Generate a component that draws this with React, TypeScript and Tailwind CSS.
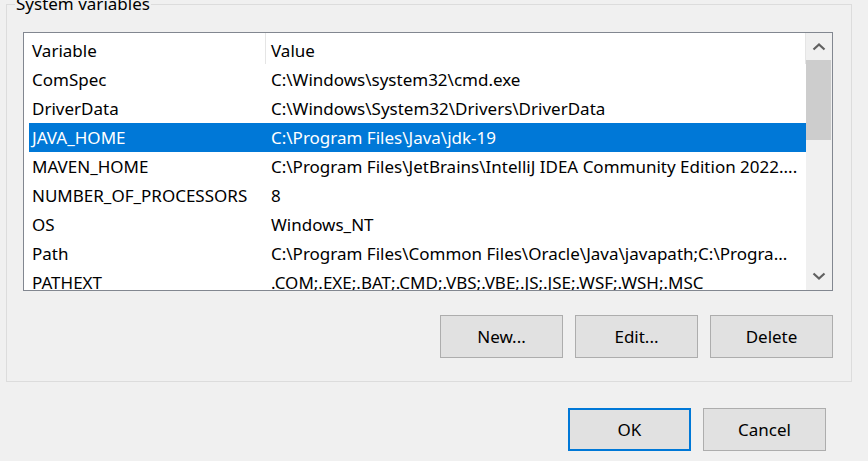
import React from "react";

type EnvVar = { name: string; value: string };

const vars: EnvVar[] = [
  { name: "ComSpec", value: "C:\\Windows\\system32\\cmd.exe" },
  { name: "DriverData", value: "C:\\Windows\\System32\\Drivers\\DriverData" },
  { name: "JAVA_HOME", value: "C:\\Program Files\\Java\\jdk-19" },
  { name: "MAVEN_HOME", value: "C:\\Program Files\\JetBrains\\IntelliJ IDEA Community Edition 2022...." },
  { name: "NUMBER_OF_PROCESSORS", value: "8" },
  { name: "OS", value: "Windows_NT" },
  { name: "Path", value: "C:\\Program Files\\Common Files\\Oracle\\Java\\javapath;C:\\Progra..." },
  { name: "PATHEXT", value: ".COM;.EXE;.BAT;.CMD;.VBS;.VBE;.JS;.JSE;.WSF;.WSH;.MSC" },
];

const selected = "JAVA_HOME";

function Chevron({ down = false }: { down?: boolean }) {
  return (
    <svg width="14" height="8" viewBox="0 0 14 8" className="block">
      <path
        d={down ? "M1.5 1.5 L7 6.5 L12.5 1.5" : "M1.5 6.5 L7 1.5 L12.5 6.5"}
        fill="none"
        stroke="#606060"
        strokeWidth="2.2"
      />
    </svg>
  );
}

function WinButton({ label, focused = false }: { label: string; focused?: boolean }) {
  return (
    <button
      type="button"
      className={[
        "flex h-[43px] w-[123px] items-center justify-center bg-[#e1e1e1] text-[17px] text-black",
        focused ? "border-2 border-[#0078d7]" : "border border-[#adadad]",
      ].join(" ")}
    >
      {label}
    </button>
  );
}

export default function App() {
  return (
    <div
      className="h-[461px] w-[868px] overflow-hidden bg-[#f0f0f0] text-black"
      style={{ fontFamily: '"Noto Sans", "Open Sans", sans-serif' }}
    >
      {/* System variables group box */}
      <div className="relative ml-[6px] mt-[4px] h-[378px] w-[846px] border border-[#dcdcdc]">
        <span className="absolute left-[8px] top-[-12px] bg-[#f0f0f0] px-[1px] text-[17px] leading-[22px]">
          System variables
        </span>

        <div className="ml-[16px] mt-[27px] flex h-[259px] w-[810px] border border-[#828790] bg-white">
          <div className="flex-1 overflow-hidden pl-[5px]">
            <div className="flex h-[32px] text-[17px]">
              <div className="flex w-[236px] items-center pl-[3px] pt-[3px]">Variable</div>
              <div className="h-[31px] w-px bg-[#e5e5e5]" />
              <div className="flex flex-1 items-center pl-[5px] pt-[3px]">Value</div>
              <div className="h-[31px] w-px bg-[#e5e5e5]" />
            </div>
            {vars.map((v) => {
              const isSel = v.name === selected;
              return (
                <div
                  key={v.name}
                  className={[
                    "flex h-[29px] items-center whitespace-nowrap text-[17px]",
                    isSel ? "bg-[#0078d7] text-white" : "",
                  ].join(" ")}
                >
                  <div className="w-[237px] shrink-0 pl-[3px]">{v.name}</div>
                  <div className="flex-1 overflow-hidden pl-[5px]">{v.value}</div>
                </div>
              );
            })}
          </div>

          {/* scrollbar */}
          <div className="flex w-[26px] flex-col bg-[#f0f0f0]">
            <div className="flex h-[27px] items-center justify-center pr-px">
              <Chevron />
            </div>
            <div className="mr-px h-[80px] bg-[#cdcdcd]" />
            <div className="flex-1" />
            <div className="flex h-[28px] items-center justify-center pr-px">
              <Chevron down />
            </div>
          </div>
        </div>

        <div className="mr-[18px] mt-[24px] flex justify-end gap-[12px]">
          <WinButton label="New..." />
          <WinButton label="Edit..." />
          <WinButton label="Delete" />
        </div>
      </div>

      <div className="mr-[42px] mt-[26px] flex justify-end gap-[12px]">
        <WinButton label="OK" focused />
        <WinButton label="Cancel" />
      </div>
    </div>
  );
}
